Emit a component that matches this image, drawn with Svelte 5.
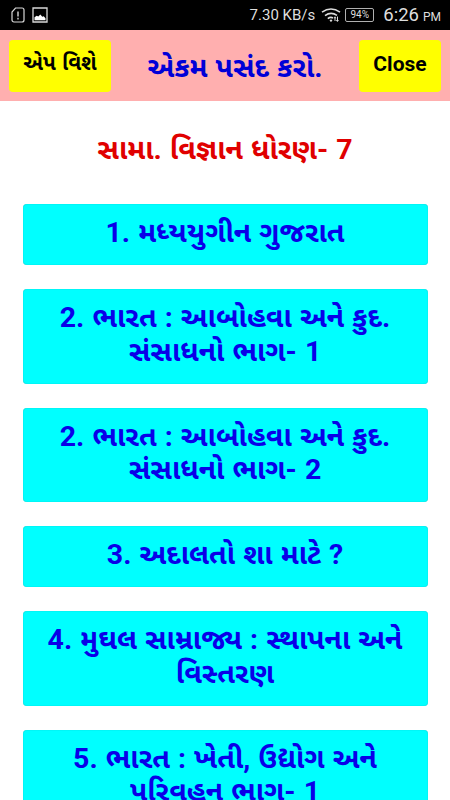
<script lang="ts">
  const chapters: string[][] = [
    ['1. મધ્યયુગીન ગુજરાત'],
    ['2. ભારત : આબોહવા અને કુદ.', 'સંસાધનો ભાગ- 1'],
    ['2. ભારત : આબોહવા અને કુદ.', 'સંસાધનો ભાગ- 2'],
    ['3. અદાલતો શા માટે ?'],
    ['4. મુઘલ સામ્રાજ્ય : સ્થાપના અને', 'વિસ્તરણ'],
    ['5. ભારત : ખેતી, ઉદ્યોગ અને', 'પરિવહન ભાગ- 1'],
  ];
</script>

<div class="screen">
  <div class="status">
    <svg class="sim" width="14" height="16" viewBox="0 0 14 16">
      <path d="M4.5 1H11a2 2 0 0 1 2 2v10a2 2 0 0 1-2 2H3a2 2 0 0 1-2-2V5z" fill="none" stroke="#d8d8d8" stroke-width="1.2" />
      <path d="M7 4.5v5M7 10.8v1.6" stroke="#d8d8d8" stroke-width="1.4" />
    </svg>
    <svg class="photo" width="16" height="16" viewBox="0 0 16 16">
      <path d="M1 1h14v14H1z" fill="none" stroke="#d8d8d8" stroke-width="1.3" />
      <path d="M2.5 13.2v-3l2.2-1.5 1.6.8 2-2 2 2.2 1.4-.4 1.8 2v1.9z" fill="#fff" />
    </svg>
    <span class="speed">7.30 KB/s</span>
    <svg class="wifi" width="20" height="15" viewBox="0 0 20 15">
      <g fill="none" stroke="#dcdcdc" stroke-width="1.6">
        <path d="M1 4.2Q10-2.2 19 4.2" />
        <path d="M4 7.6Q10 3.2 16 7.4" />
        <path d="M6.8 10.6Q9.5 8.5 12 10" />
      </g>
      <path d="M8.5 12.5l1.5-1.2 1.5 1.2-1.5 1.4zM12.5 10.2l1.5-2 1.5 2zM14.8 12l1.6 2 1.6-2zM13.5 10h1v3h-1zM16 8.5h1V12h-1z" fill="#dcdcdc" />
    </svg>
    <span class="battery">94%</span>
    <span class="clock">6:26<small>PM</small></span>
  </div>
  <header>
    <button class="about">એપ વિશે</button>
    <h1>એકમ પસંદ કરો.</h1>
    <button class="close">Close</button>
  </header>
  <main>
    <h2>સામા. વિજ્ઞાન ધોરણ- 7</h2>
    {#each chapters as lines}
      <button class="chapter">
        {#each lines as line}<span>{line}</span>{/each}
      </button>
    {/each}
  </main>
</div>

<style>
  :global(body) {
    background: #fff;
  }

  .screen {
    height: 800px;
    overflow: hidden;
    font-family: Roboto, 'Noto Sans Gujarati', 'Noto Sans', sans-serif;
    word-spacing: 1px;
  }

  .status {
    display: flex;
    align-items: center;
    height: 30px;
    padding: 0 10px 0 11px;
    box-sizing: border-box;
    background: #000;
    color: #dedede;
    white-space: nowrap;
    word-spacing: 0;
  }

  .photo {
    margin-left: 7px;
  }

  .speed {
    margin-left: auto;
    font-size: 15px;
  }

  .wifi {
    margin: 0 4px 0 6px;
  }

  .battery {
    width: 29px;
    height: 14px;
    box-sizing: border-box;
    border: 1px solid #b0b0b0;
    border-radius: 2px;
    font-size: 10px;
    line-height: 12px;
    text-align: center;
  }

  .clock {
    margin-left: 9px;
    font-size: 18.5px;
    line-height: 30px;
    padding-top: 2px;
  }

  small {
    margin-left: 4px;
    font-size: 12px;
  }

  .status {
    padding-right: 9px;
  }

  header {
    display: flex;
    justify-content: space-between;
    height: 71px;
    padding: 10px 9px 0;
    box-sizing: border-box;
    background: #ffafaf;
  }

  h1, h2 {
    margin: 0;
    font-weight: bold;
    font-size: 28.5px;
    line-height: 33px;
    white-space: nowrap;
  }

  h1 {
    padding-top: 11px;
    color: #0000d8;
  }

  button {
    border: 0;
    border-radius: 4px;
    font-family: inherit;
    font-weight: bold;
    word-spacing: inherit;
    white-space: nowrap;
  }

  header button {
    height: 52px;
    padding: 0 0 4px;
    background: #ff0;
    color: #000;
    font-size: 21px;
  }

  .about {
    width: 102px;
    padding-bottom: 2px;
  }

  .close {
    width: 82px;
  }

  main {
    display: flex;
    flex-direction: column;
    gap: 24px;
    padding: 32px 22.5px 0;
  }

  h2 {
    margin-bottom: 14px;
    color: #e00000;
    text-align: center;
  }

  .chapter {
    flex: none;
    padding: 12px 0 15.6px;
    background: #0ff;
    box-shadow: inset 0 0 1px #00a0a8;
    color: #0a00e8;
  }

  .chapter span {
    display: block;
    font-size: 28.5px;
    line-height: 33.5px;
  }
</style>
